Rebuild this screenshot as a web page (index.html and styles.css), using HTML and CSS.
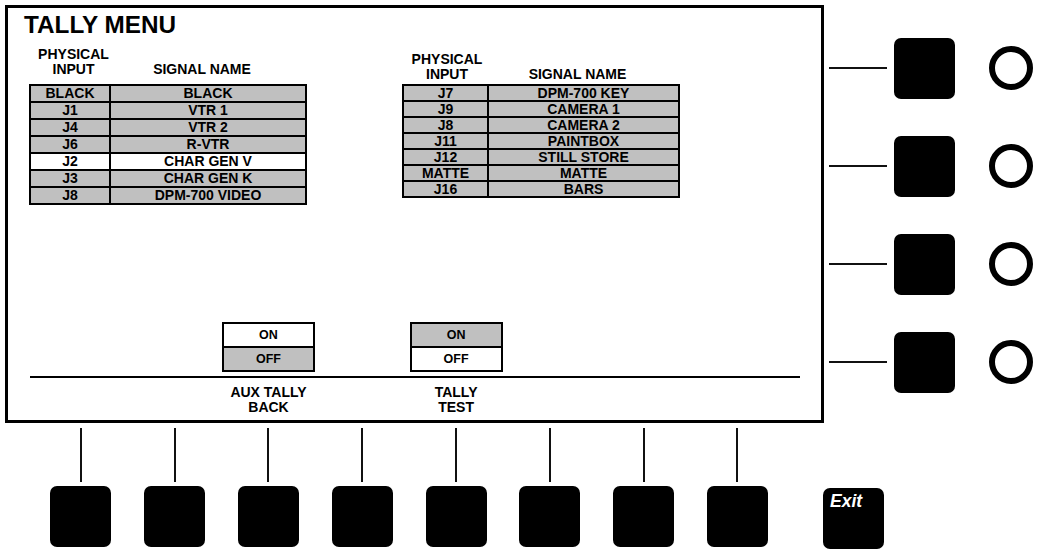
FILE: index.html
```html
<!DOCTYPE html>
<html>
<head>
	<meta charset="utf-8">
	<title>Tally Menu</title>
	<link rel="stylesheet" href="styles.css">
</head>
<body>
<div class="panel">
	<div class="screen">
		<h1 class="title">TALLY MENU</h1>
		<div class="tables">
			<div class="group group-left">
				<div class="thead">
					<div class="hc1">PHYSICAL<br>INPUT</div>
					<div class="hc2">SIGNAL NAME</div>
				</div>
				<div class="tbl">
					<div class="c">BLACK</div><div class="c">BLACK</div>
					<div class="c">J1</div><div class="c">VTR 1</div>
					<div class="c">J4</div><div class="c">VTR 2</div>
					<div class="c">J6</div><div class="c">R-VTR</div>
					<div class="c hl">J2</div><div class="c hl">CHAR GEN V</div>
					<div class="c">J3</div><div class="c">CHAR GEN K</div>
					<div class="c">J8</div><div class="c">DPM-700 VIDEO</div>
				</div>
			</div>
			<div class="group group-right">
				<div class="thead">
					<div class="hc1">PHYSICAL<br>INPUT</div>
					<div class="hc2">SIGNAL NAME</div>
				</div>
				<div class="tbl">
					<div class="c">J7</div><div class="c">DPM-700 KEY</div>
					<div class="c">J9</div><div class="c">CAMERA 1</div>
					<div class="c">J8</div><div class="c">CAMERA 2</div>
					<div class="c">J11</div><div class="c">PAINTBOX</div>
					<div class="c">J12</div><div class="c">STILL STORE</div>
					<div class="c">MATTE</div><div class="c">MATTE</div>
					<div class="c">J16</div><div class="c">BARS</div>
				</div>
			</div>
		</div>

		<!-- soft key area at the bottom of the screen -->
		<div class="softarea">
			<div class="toggles">
				<div class="toggle col3"><div class="opt">ON</div><div class="opt sel">OFF</div></div>
				<div class="toggle col5"><div class="opt sel">ON</div><div class="opt">OFF</div></div>
			</div>
			<div class="rule"></div>
			<div class="labels">
				<div class="label col3">AUX TALLY<br>BACK</div>
				<div class="label col5">TALLY<br>TEST</div>
			</div>
		</div>
	</div>

	<div class="side">
		<div class="side-row"><span class="wire"></span><span class="btn"></span><span class="lamp"></span></div>
		<div class="side-row"><span class="wire"></span><span class="btn"></span><span class="lamp"></span></div>
		<div class="side-row"><span class="wire"></span><span class="btn"></span><span class="lamp"></span></div>
		<div class="side-row"><span class="wire"></span><span class="btn"></span><span class="lamp"></span></div>
	</div>

	<div class="keys">
		<div class="key"><span class="stem"></span><span class="btn"></span></div>
		<div class="key"><span class="stem"></span><span class="btn"></span></div>
		<div class="key"><span class="stem"></span><span class="btn"></span></div>
		<div class="key"><span class="stem"></span><span class="btn"></span></div>
		<div class="key"><span class="stem"></span><span class="btn"></span></div>
		<div class="key"><span class="stem"></span><span class="btn"></span></div>
		<div class="key"><span class="stem"></span><span class="btn"></span></div>
		<div class="key"><span class="stem"></span><span class="btn"></span></div>
	</div>
	<div class="exit">Exit</div>
</div>
</body>
</html>
```

FILE: styles.css
```css
* { margin: 0; padding: 0; box-sizing: border-box; }
html, body { background: #fff; overflow: hidden; }
body { font-family: "Liberation Sans", Arial, sans-serif; font-weight: bold; color: #000; }

/* whole panel: screen + side keys on top, soft keys below */
.panel { padding: 5px 0 0 5px; display: grid; grid-template-columns: 819px auto; grid-template-rows: 418px auto; }

.screen { border: 3px solid #000; display: flex; flex-direction: column; padding-top: 4px; }
.title { font-size: 24.3px; line-height: 26px; margin-left: 16px; font-weight: bold; }

.tables { display: flex; gap: 95px; margin-top: 9px; padding-left: 21px; }
.group { width: 278px; }
.thead { display: grid; grid-template-columns: 78px 194px; column-gap: 2px; padding: 0 2px; font-size: 14px; line-height: 15px; text-align: center; }
.hc1 { padding-left: 7px; }
.hc2 { padding-right: 12px; align-self: end; }
.group-left .thead { margin-bottom: 6.5px; }
.group-right .thead { grid-template-columns: 83px 189px; margin-top: 5px; margin-bottom: 1.5px; }
.group-right .hc1 { padding-left: 3px; }

.tbl { display: grid; grid-template-columns: 78px 194px; gap: 2px; padding: 2px; background: #000; font-size: 14px; }
.group-left .tbl { grid-auto-rows: 15px; line-height: 15px; }
.group-right .tbl { grid-template-columns: 83px 189px; grid-auto-rows: 14px; line-height: 14px; }
.c { background: #c0c0c0; text-align: center; white-space: nowrap; }
.c.hl { background: #fff; }

.softarea { margin-top: auto; padding-bottom: 5px; }
.toggles, .labels { display: grid; grid-template-columns: repeat(8, 93.8px); padding-left: 26px; }
.col3 { grid-column: 3; }
.col5 { grid-column: 5; }
.toggle { width: 93px; justify-self: center; display: grid; grid-auto-rows: 22px; gap: 2px; padding: 2px; background: #000; font-size: 12.5px; line-height: 22px; }
.opt { background: #fff; text-align: center; }
.opt.sel { background: #c0c0c0; }
.rule { height: 2px; background: #000; margin: 4px 0 0 22px; width: 770px; }
.labels { margin-top: 7px; font-size: 14px; line-height: 15px; text-align: center; }

/* right hand keys */
.side { padding-top: 14px; display: flex; flex-direction: column; }
.side-row { height: 98px; display: flex; align-items: center; padding-left: 5px; }
.wire { width: 58px; height: 2px; background: #111; }
.btn { display: block; width: 61px; height: 61px; border-radius: 7px; background: #000; }
.side-row .btn { margin-left: 7px; }
.lamp { width: 44px; height: 44px; border: 6px solid #000; border-radius: 50%; margin-left: 34px; }

/* bottom soft keys */
.keys { display: grid; grid-template-columns: repeat(8, 93.8px); padding-left: 29px; }
.key { display: flex; flex-direction: column; align-items: center; }
.stem { width: 2px; height: 54px; margin-top: 5px; background: #111; }
.key .btn { margin-top: 4px; }
.exit { width: 61px; height: 61px; border-radius: 7px; background: #000; color: #fff; font-style: italic; font-size: 17.5px; line-height: 17px; padding: 5px 0 0 7px; margin: 65px 0 0 -1px; }
```
